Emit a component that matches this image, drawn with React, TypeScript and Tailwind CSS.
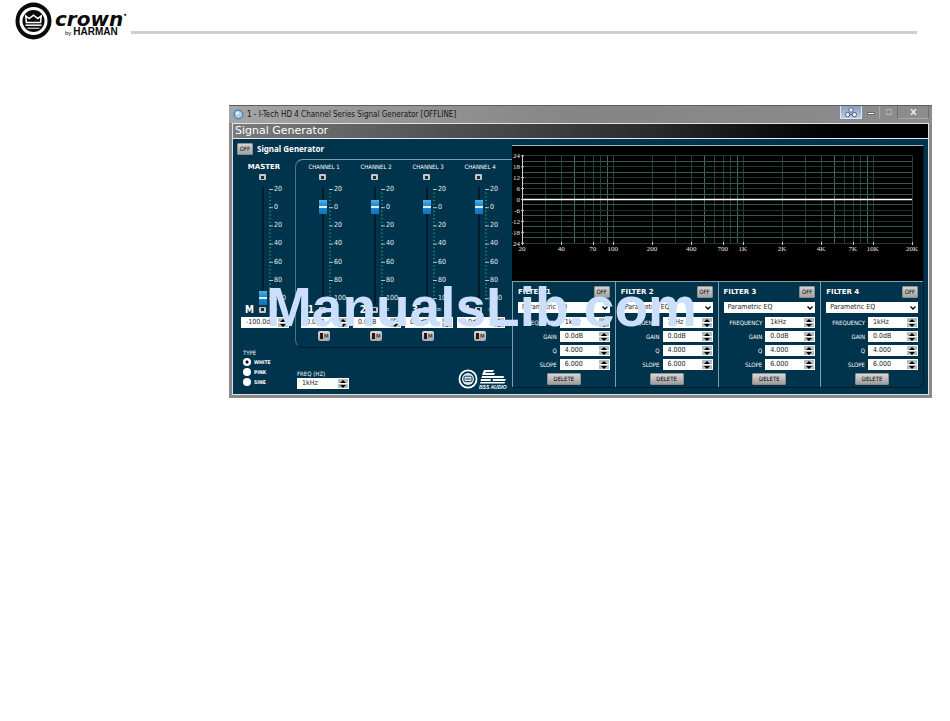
import React, { ReactNode, useState } from "react";

interface FieldProps {
    id: string,
    label: string,
    value: string,
    className?: string
}

interface FaderProps {
    name: string,
    short: string,
    start: number,
    startLabel: string,
    master?: boolean
}

const scale = ["20", "0", "20", "40", "60", "80", "100"]
const channels = [1, 2, 3, 4]

const CrownLogo = () => (
    <svg className="mt-0.5 h-[38px] w-[37px] shrink-0" viewBox="0 0 37 38">
        <ellipse cx="18.5" cy="19" rx="18" ry="18.5" fill="#0a0a0a" />
        <circle cx="18.5" cy="19" r="14" fill="#fff" />
        <circle cx="18.5" cy="19" r="11" fill="#0a0a0a" />
        <path d="M10.8 14 L14.2 16.6 L18.5 13.2 L22.8 16.6 L26.2 14 L25.6 20.6 H11.4 Z" fill="none" stroke="#fff" strokeWidth="1.5" />
        <path d="M10.5 23.2 H26.5" stroke="#fff" strokeWidth="1.5" />
        <path d="M12.5 26.2 H24.5" stroke="#fff" strokeWidth="1" />
    </svg>
)

const BssLogo = () => (
    <svg className="h-5 w-[50px]" viewBox="0 0 50 20">
        <circle cx="10" cy="10" r="8.6" fill="none" stroke="#fff" strokeWidth="1.8" />
        <circle cx="10" cy="10" r="6" fill="#dfe8ee" />
        <rect x="6" y="7.2" width="8" height="5.4" rx="1.5" fill="none" stroke="#00344d" strokeWidth="1" />
        <path d="M7.5 10 H12.5" stroke="#00344d" strokeWidth="1" />
        <path d="M26 1 H36 L35 3 H28 L27 4 H37 L36 6 H24 Z M24 7 H46 L45.5 9 H23.5 Z M23 10 H33 L32.5 12 H22.5 Z M35 10 H48 L47 12 H34.5 Z M22.5 13 H47 L46.5 14.5 H22 Z" fill="#fff" />
        <text x="21" y="20" fill="#fff" fontFamily="Liberation Sans, sans-serif" fontSize="5" fontWeight="bold" fontStyle="italic">BSS AUDIO</text>
    </svg>
)

const Spinner = ({ label }: { label: string }) => (
    <span className="flex w-[10px] shrink-0 flex-col gap-px py-px">
        <button type="button" aria-label={label + " up"} className="flex flex-1 items-center justify-center bg-[#b9bcbc]">
            <svg className="h-[3px] w-[6px]" viewBox="0 0 6 3"><path d="M0 3 L3 0 L6 3 Z" fill="#000" /></svg>
        </button>
        <button type="button" aria-label={label + " down"} className="flex flex-1 items-center justify-center bg-[#b9bcbc]">
            <svg className="h-[3px] w-[6px]" viewBox="0 0 6 3"><path d="M0 0 L3 3 L6 0 Z" fill="#000" /></svg>
        </button>
    </span>
)

const NumberField = ({ id, label, value, className }: FieldProps) => {
    const [text, setText] = useState(value)
    return (
        <span className={"flex h-[11px] bg-white pr-px " + (className ?? "")}>
            <input
                id={id}
                aria-label={label}
                className="w-full min-w-0 flex-1 bg-transparent pl-[5px] text-[7px] leading-[11px] text-[#222] outline-none"
                value={text}
                onChange={(e) => setText(e.target.value)}
            />
            <Spinner label={label} />
        </span>
    )
}

const OffButton = ({ label }: { label: string }) => (
    <button
        type="button"
        aria-label={label}
        className="h-[12px] w-[16px] rounded-[1px] border border-[#8d8d8d] bg-linear-to-b from-[#d4d4d4] to-[#a3a3a3] text-center text-[6px] leading-[10px] text-black"
    >
        OFF
    </button>
)

const Led = ({ label, icon }: { label: string, icon: string }) => (
    <button type="button" aria-label={label} className="flex h-[6px] w-[7px] items-center justify-center rounded-[1px] bg-[#c3c6c8]">
        <svg className="h-[4px] w-[5px]" viewBox="0 0 5 4"><path d={icon} fill="#1b2a33" /></svg>
    </button>
)

const Ticks = () => (
    <svg className="h-[123px] w-[5px]" viewBox="0 0 5 123">
        {Array.from({ length: 31 }, (_, i) => (
            <path key={i} d={`M0 ${7.5 + i * 3.64} H2`} stroke="#1f8f6c" strokeWidth="1" />
        ))}
        {scale.map((_, i) => (
            <path key={i} d={`M0 ${7.5 + i * 18.2} H4`} stroke="#a9c3cf" strokeWidth="1" />
        ))}
    </svg>
)

const Fader = ({ name, short, start, startLabel, master }: FaderProps) => {
    const [level, setLevel] = useState(start)
    return (
        <div className="w-[52px] shrink-0">
            <label
                htmlFor={"fader-" + short}
                className={"block pt-[3px] text-center leading-[8px] text-white " + (master ? "font-['DejaVu_Sans',sans-serif] text-[7px] font-bold" : "text-[6px]")}
            >
                {name}
            </label>
            <div className="mt-[3px] flex pl-[21px]">
                <Led label={name + " up"} icon="M1 4 V1 H4 V4 Z" />
            </div>
            <div className="mt-[2px] flex pl-[21px]">
                <input
                    id={"fader-" + short}
                    type="range"
                    min={-100}
                    max={20}
                    value={level}
                    onChange={(e) => setLevel(Number(e.target.value))}
                    className="h-[123px] w-[8px] appearance-none bg-[linear-gradient(90deg,transparent_3px,#001a29_3px,#001a29_5px,transparent_5px)] bg-[length:8px_118px] bg-bottom bg-no-repeat [direction:rtl] [writing-mode:vertical-lr] [&::-webkit-slider-thumb]:h-[14px] [&::-webkit-slider-thumb]:w-[8px] [&::-webkit-slider-thumb]:appearance-none [&::-webkit-slider-thumb]:bg-[linear-gradient(180deg,#4db2ea_0px,#1c86cc_6px,#d9efff_6px,#d9efff_8px,#1c86cc_8px,#1273b8_14px)]"
                />
                <div className="ml-[2px]">
                    <Ticks />
                </div>
                <div className="mt-[3px] flex h-[117px] flex-col justify-between text-[7px] leading-[8px] text-[#e4edf1]">
                    {scale.map((mark, i) => (
                        <span key={i}>{mark}</span>
                    ))}
                </div>
            </div>
            <div className="flex h-[10px] items-center">
                <span className="w-[21px] pr-[5px] text-right text-[10px] leading-[10px] font-bold text-white">{short}</span>
                <Led label={name + " down"} icon="M1 0 H4 V3 H1 Z" />
                <span className="ml-[6px] text-[8px] leading-[8px] text-[#c7d6dd]">∞</span>
            </div>
            <NumberField id={"level-" + short} label={name + " level"} value={startLabel} className="mt-[2px] ml-[3px] w-[48px]" />
            {!master && (
                <button
                    type="button"
                    aria-label={"Mute " + name}
                    className="mt-[3px] ml-[20px] flex h-[10px] w-[12px] items-center gap-px rounded-[2px] bg-linear-to-b from-[#dcdcdc] to-[#a6a6a6] pl-[2px] text-[6px] leading-[10px] text-black"
                >
                    <span className="h-[6px] w-[3px] bg-[#3a0f12]"></span>M
                </button>
            )}
        </div>
    )
}

const decades = [20, 200, 2000]
const freqLabels: [number, string][] = [
    [20, "20"], [40, "40"], [70, "70"], [100, "100"], [200, "200"], [400, "400"], [700, "700"],
    [1000, "1K"], [2000, "2K"], [4000, "4K"], [7000, "7K"], [10000, "10K"], [20000, "20K"]
]
const gainLabels = [24, 18, 12, 6, 0, -6, -12, -18, -24]

const freqX = (hz: number) => 10 + Math.log10(hz / 20) * 130
const gainY = (db: number) => 53.5 - db * 1.82

const Response = () => (
    <svg className="block w-full bg-black" viewBox="0 0 411 135" fontFamily="Liberation Serif, serif" fontSize="7" fill="#e8e8e8">
        {decades.map((d) =>
            [1, 1.5, 2, 2.5, 3, 3.5, 4, 4.5, 5, 10].map((m) => (
                <path key={d + "-" + m} d={`M${Math.round(freqX(d * m)) + 0.5} 9.5 V97`} stroke={m === 2.5 || m === 4.5 ? "#3f6b60" : "#243f38"} />
            ))
        )}
        {Array.from({ length: 17 }, (_, i) => (
            <path key={i} d={`M10 ${Math.floor(gainY(24 - i * 3)) + 0.5} H400`} stroke={i % 2 ? "#33584e" : "#203831"} />
        ))}
        <path d="M10.5 9 V98" stroke="#c9cdcb" />
        <path d="M10 53.5 H400" stroke="#fff" strokeWidth="1.5" />
        {gainLabels.map((g) => (
            <g key={g}>
                <path d={`M9 ${gainY(g)} H12`} stroke="#c9cdcb" />
                <text x="8" y={gainY(g) + 2.5} textAnchor="end">{g === -24 ? "24" : g}</text>
            </g>
        ))}
        {freqLabels.map(([hz, text]) => (
            <g key={hz}>
                <path d={`M${Math.round(freqX(hz)) + 0.5} 96 V99`} stroke="#c9cdcb" />
                <text x={freqX(hz)} y="105" textAnchor="middle">{text}</text>
            </g>
        ))}
    </svg>
)

const FilterRow = ({ id, label, value }: FieldProps) => (
    <div className="flex items-center justify-end gap-[3px]">
        <label htmlFor={id} className="text-[6px] leading-[8px] text-white">{label}</label>
        <NumberField id={id} label={label} value={value} className="w-[50px]" />
    </div>
)

const Filter = ({ index }: { index: number }) => (
    <div className="border-t border-l border-[#7fa0ae] px-[5px] pt-[4px] pb-[2px]">
        <div className="flex items-center justify-between">
            <h3 className="font-['DejaVu_Sans',sans-serif] text-[7px] leading-[8px] font-bold text-white">FILTER {index}</h3>
            <OffButton label={"Filter " + index} />
        </div>
        <div className="relative mt-[4px] h-[11px]">
            <select
                aria-label={"Filter " + index + " type"}
                className="block h-[11px] w-full appearance-none bg-white pl-1 text-[7px] leading-[11px] text-[#222] outline-none"
            >
                <option>Parametric EQ</option>
            </select>
            <svg className="pointer-events-none absolute top-[4px] right-[2px] h-[4px] w-[6px]" viewBox="0 0 6 4">
                <path d="M0.5 0.5 L3 3 L5.5 0.5" fill="none" stroke="#000" strokeWidth="1.3" />
            </svg>
        </div>
        <div className="mt-[4px] flex flex-col gap-[3px]">
            <FilterRow id={"freq-" + index} label="FREQUENCY" value="1kHz" />
            <FilterRow id={"gain-" + index} label="GAIN" value="0.0dB" />
            <FilterRow id={"q-" + index} label="Q" value="4.000" />
            <FilterRow id={"slope-" + index} label="SLOPE" value="6.000" />
        </div>
        <button
            type="button"
            className="mx-auto mt-[3px] block h-[12px] w-[34px] rounded-[1px] border border-[#8d8d8d] bg-linear-to-b from-[#d8d8d8] to-[#9d9d9d] text-center text-[6px] leading-[10px] text-black"
        >
            DELETE
        </button>
    </div>
)

const WindowButton = ({ label, className, children }: { label: string, className: string, children?: ReactNode }) => (
    <button type="button" aria-label={label} className={"flex h-[13px] items-center justify-center border border-t-0 " + className}>
        {children}
    </button>
)

const TitleBar = () => (
    <div className="flex h-[18px] items-start border-t border-[#5e5e5e] bg-linear-to-r from-[#a5a5a5] via-[#858585] to-[#8c8c8c] pr-[3px] pl-[4px]">
        <svg className="mt-[3px] h-[11px] w-[11px]" viewBox="0 0 11 11">
            <circle cx="5.5" cy="5.5" r="5" fill="#4d86bd" />
            <circle cx="5.5" cy="5.5" r="3.6" fill="#a9cdea" />
            <circle cx="4.5" cy="4" r="1.8" fill="#e2f1fb" />
        </svg>
        <h1 className="mt-[3px] ml-[3px] flex-1 text-[8px] leading-[11px] text-[#161616]">
            1 - I-Tech HD 4 Channel Series Signal Generator [OFFLINE]
        </h1>
        <WindowButton label="Link" className="w-[22px] border-[#dbe6f5] bg-linear-to-b from-[#8e9fb8] to-[#b9cbe6]">
            <svg className="h-[11px] w-[14px]" viewBox="0 0 14 11" fill="none" stroke="#4f6482" strokeWidth="1">
                <circle cx="7" cy="3" r="2.2" fill="#e8f0fa" />
                <circle cx="3.6" cy="7.6" r="2.2" fill="#e8f0fa" />
                <circle cx="10.4" cy="7.6" r="2.2" fill="#e8f0fa" />
                <path d="M5.5 7.6 H8.5" />
            </svg>
        </WindowButton>
        <WindowButton label="Minimize" className="w-[18px] border-transparent border-r-[#a9a9a9]">
            <span className="mt-[3px] h-[3px] w-[8px] border border-[#666] bg-white"></span>
        </WindowButton>
        <WindowButton label="Maximize" className="w-[18px] border-transparent border-r-[#6f6f6f]">
            <span className="h-[6px] w-[6px] border border-[#b4b4b4]"></span>
        </WindowButton>
        <WindowButton label="Close" className="w-[31px] border-transparent border-r-[#6f6f6f] border-b-[#a9a9a9]">
            <svg className="h-[6px] w-[7px]" viewBox="0 0 7 6"><path d="M1 0 L6 6 M6 0 L1 6" stroke="#f2f2f2" strokeWidth="1.4" /></svg>
        </WindowButton>
    </div>
)

const NoiseType = () => {
    const [type, setType] = useState("WHITE")
    return (
        <fieldset className="w-[54px] shrink-0 pl-[3px]">
            <legend className="text-[6px] leading-[7px] text-white">TYPE</legend>
            {["WHITE", "PINK", "SINE"].map((name) => (
                <label key={name} className="mt-px flex h-[9px] items-center gap-[3px] text-[5px] leading-[8px] font-bold text-white">
                    <input
                        type="radio"
                        name="type"
                        checked={type === name}
                        onChange={() => setType(name)}
                        className="h-[8px] w-[8px] appearance-none rounded-full bg-white checked:bg-[radial-gradient(circle,#000_1px,#fff_2px)]"
                    />
                    {name}
                </label>
            ))}
        </fieldset>
    )
}

const App = () => {
    return (
        <div className="bg-white font-['DejaVu_Sans',sans-serif]">
            <header className="flex h-[105px] items-start pr-[33px] pl-[15px]">
                <CrownLogo />
                <div className="w-[79px] shrink-0 pt-[11px] pl-[3px] text-[#0a0a0a]">
                    <p className="flex text-[20px] leading-[16px] font-bold italic">
                        crown<span className="text-[6px] leading-[8px] not-italic">•</span>
                    </p>
                    <p className="flex items-baseline gap-[2px] pl-[10px] font-['Liberation_Sans',sans-serif] leading-[10px]">
                        <span className="text-[6px]">by</span>
                        <span className="text-[10px] font-bold">HARMAN</span>
                    </p>
                </div>
                <div className="mt-[31px] h-[3px] flex-1 bg-[#cfcfcf]"></div>
            </header>

            <main className="pr-[18px] pl-[229px] font-['DejaVu_Sans_Condensed','DejaVu_Sans',sans-serif]">
                <div className="relative bg-[#8a8a8a]">
                    <TitleBar />
                    <div className="mx-[3px] border border-[#dfe3e6] bg-[#00344d]">
                        <h2 className="h-[15px] border-b border-[#e8ecef] bg-linear-to-r from-[#7b7b7b] via-[#2c2c2c] via-60% to-black pl-[2px] font-['DejaVu_Sans',sans-serif] text-[11px] leading-[14px] text-white">
                            Signal Generator
                        </h2>
                        <div className="flex">
                            <section className="w-[279px] shrink-0">
                                <div className="flex h-[20px] items-center gap-[4px] pl-[4px]">
                                    <OffButton label="Signal Generator" />
                                    <span className="font-['Noto_Sans',sans-serif] text-[8px] leading-[10px] font-bold text-white">Signal Generator</span>
                                </div>
                                <div className="flex">
                                    <div className="w-[62px] pt-px pl-[5px]">
                                        <Fader name="MASTER" short="M" start={-100} startLabel="-100.0dB" master />
                                    </div>
                                    <div className="flex h-[189px] flex-1 rounded-l-lg border border-r-0 border-t-[#7fa0ae] border-b-[#001c2c] border-l-[#4a7385] pl-[2px]">
                                        {channels.map((n) => (
                                            <Fader key={n} name={"CHANNEL " + n} short={String(n)} start={0} startLabel="0.0dB" />
                                        ))}
                                    </div>
                                </div>
                                <div className="flex pt-px pr-[4px] pl-[7px]">
                                    <NoiseType />
                                    <div className="flex flex-1 items-start justify-between">
                                        <div className="pt-[21px] pl-[3px]">
                                            <label htmlFor="freq" className="block text-[6px] leading-[8px] text-white">FREQ (HZ)</label>
                                            <NumberField id="freq" label="Frequency" value="1kHz" className="w-[52px]" />
                                        </div>
                                        <div className="pt-[20px]">
                                            <BssLogo />
                                        </div>
                                    </div>
                                </div>
                            </section>
                            <section className="mt-[6px] mr-[4px] mb-[6px] flex-1 rounded-br-md border-t border-r border-b border-t-[#9fb6c0] border-r-[#001c2c] border-b-[#001c2c]">
                                <Response />
                                <div className="grid grid-cols-4">
                                    {channels.map((n) => (
                                        <Filter key={n} index={n} />
                                    ))}
                                </div>
                            </section>
                        </div>
                    </div>
                    <div className="h-[3px]"></div>
                    <div className="pointer-events-none absolute top-[174px] left-[37px] font-['Liberation_Sans',sans-serif] text-[55px] leading-[56px] font-bold text-[#cbdefb]">
                        ManualsLib.com
                    </div>
                </div>
            </main>
        </div>
    )
}

export default App
